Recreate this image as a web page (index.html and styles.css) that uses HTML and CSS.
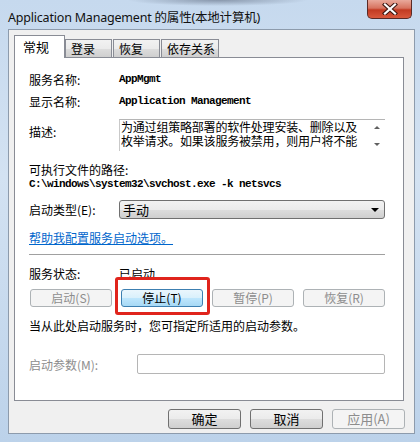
FILE: index.html
```html
<!DOCTYPE html>
<html>
<head>
    <meta charset="utf-8">
    <link rel="stylesheet" href="styles.css">
</head>
<body>
    <div class="window">
        <div class="titlebar">
            <span class="title">Application Management 的属性(本地计算机)</span>
            <div class="close">
                <svg width="16" height="12" viewBox="0 0 16 12">
                    <path d="M3 1.5 L13 10.5 M13 1.5 L3 10.5" stroke="#3b1510" stroke-width="4.2" stroke-linecap="square"/>
                    <path d="M3 1.5 L13 10.5 M13 1.5 L3 10.5" stroke="#ffffff" stroke-width="2.2" stroke-linecap="square"/>
                </svg>
            </div>
        </div>

        <div class="client">
            <div class="tabs">
                <div class="tab selected">常规</div>
                <div class="tab">登录</div>
                <div class="tab">恢复</div>
                <div class="tab">依存关系</div>
            </div>

            <div class="panel">
                <div class="row first">
                    <span class="label">服务名称:</span>
                    <span class="mono">AppMgmt</span>
                </div>
                <div class="row">
                    <span class="label">显示名称:</span>
                    <span class="mono">Application Management</span>
                </div>
                <div class="row desc-row">
                    <span class="label desc-label">描述:</span>
                    <div class="textarea">
                        <div class="desc-text">
                            <div>为通过组策略部署的软件处理安装、删除以及</div>
                            <div>枚举请求。如果该服务被禁用，则用户将不能</div>
                        </div>
                        <div class="scroll">
                            <span class="arrow up"></span>
                            <span class="arrow down"></span>
                        </div>
                    </div>
                </div>
                <div class="path-label">可执行文件的路径:</div>
                <div class="mono path">C:\windows\system32\svchost.exe -k netsvcs</div>
                <div class="row select-row">
                    <span class="label">启动类型(E):</span>
                    <div class="select">
                        <span>手动</span>
                        <span class="select-arrow"></span>
                    </div>
                </div>
                <a class="help" href="#">帮助我配置服务启动选项。</a>
                <div class="separator"></div>
                <div class="row status-row">
                    <span class="label">服务状态:</span>
                    <span>已启动</span>
                </div>
                <div class="actions">
                    <button class="btn" disabled>启动(S)</button>
                    <button class="btn hot">停止(T)</button>
                    <button class="btn" disabled>暂停(P)</button>
                    <button class="btn" disabled>恢复(R)</button>
                </div>
                <div class="note">当从此处启动服务时，您可指定所适用的启动参数。</div>
                <div class="row param-row">
                    <span class="label disabled-text">启动参数(M):</span>
                    <div class="input"></div>
                </div>
            </div>

            <div class="footer">
                <button class="btn wide">确定</button>
                <button class="btn wide">取消</button>
                <button class="btn wide" disabled>应用(A)</button>
            </div>
        </div>
    </div>
</body>
</html>
```

FILE: styles.css
```css
body {
    margin: 0;
    width: 420px;
    height: 442px;
    overflow: hidden;
    font-family: "Noto Sans CJK SC", "Noto Sans", sans-serif;
    font-size: 12px;
    color: #000;
}

.window {
    height: 442px;
    display: flex;
    flex-direction: column;
    background: linear-gradient(180deg, #c6d9ee 0%, #d3e2f2 40%, #bcd2ea 100%);
    box-sizing: border-box;
    padding: 0 5px 8px 8px;
}

.titlebar {
    height: 29px;
    display: flex;
    justify-content: space-between;
    align-items: flex-start;
    background: radial-gradient(ellipse 90px 6px at 210px 0px, rgba(60, 70, 90, 0.45), transparent);
}

.title {
    margin-top: 7px;
    font-family: "Noto Sans", "Noto Sans CJK SC", sans-serif;
    font-size: 12.5px;
    letter-spacing: -0.2px;
    color: #111;
}

.close {
    width: 45px;
    height: 19px;
    margin-right: 3px;
    box-sizing: border-box;
    border: 1px solid #5a2a26;
    border-top: none;
    border-radius: 0 0 5px 5px;
    background: linear-gradient(180deg, #e9a99b 0%, #d7735f 45%, #c23a22 55%, #d9583c 100%);
    display: flex;
    align-items: center;
    justify-content: center;
}

.client {
    flex: 1;
    background: #f0f0f0;
    border: 1px solid #8d9bac;
    padding: 5px 10px 0 5px;
    display: flex;
    flex-direction: column;
}

.tabs {
    display: flex;
    align-items: flex-end;
    height: 22px;
    position: relative;
    z-index: 1;
}

.tab {
    height: 18px;
    box-sizing: border-box;
    border: 1px solid #898c95;
    border-bottom: none;
    margin-right: 1px;
    padding: 0 5px;
    line-height: 17px;
    font-size: 12px;
    white-space: nowrap;
    background: linear-gradient(180deg, #f2f2f2 0%, #ebebeb 50%, #dddddd 51%, #cfcfcf 100%);
}

.tab.selected {
    height: 23px;
    width: 51px;
    padding: 2px 8px 0;
    font-size: 13px;
    background: #fff;
    margin-bottom: -1px;
    margin-right: 0;
}

.tab:nth-child(2) { width: 47px; }
.tab:nth-child(3) { width: 47px; }
.tab:nth-child(4) { width: 58px; }

.panel {
    height: 344px;
    box-sizing: border-box;
    background: #fff;
    border: 1px solid #898c95;
    padding: 14px 18px 0 14px;
    display: flex;
    flex-direction: column;
}

.row {
    display: flex;
    align-items: center;
    height: 14px;
    margin-top: 8px;
}

.row.first {
    margin-top: 0;
}

.label {
    width: 90px;
    flex-shrink: 0;
}

.mono {
    font-family: "Liberation Mono", monospace;
    font-size: 11px;
    font-weight: bold;
    letter-spacing: -0.6px;
    line-height: 14px;
}

.desc-row {
    height: 32px;
    margin-top: 11px;
    align-items: flex-start;
}

.desc-label {
    padding-top: 4px;
}

.textarea {
    flex: 1;
    height: 32px;
    display: flex;
    border-top: 1px solid #b5b5b5;
    border-left: 1px solid #c9c9c9;
    box-sizing: border-box;
}

.desc-text {
    flex: 1;
    white-space: nowrap;
    line-height: 14px;
    padding-left: 1px;
    letter-spacing: -0.2px;
}

.scroll {
    width: 16px;
    display: flex;
    flex-direction: column;
    align-items: center;
    justify-content: space-between;
    padding: 6px 0 5px;
    box-sizing: border-box;
}

.arrow {
    width: 0;
    height: 0;
    border-left: 3px solid transparent;
    border-right: 3px solid transparent;
}

.arrow.up {
    border-bottom: 3px solid #606060;
}

.arrow.down {
    border-top: 3px solid #606060;
}

.path-label {
    margin-top: 12px;
    line-height: 14px;
}

.path {
    line-height: 14px;
}

.select-row {
    height: 19px;
    margin-top: 9px;
}

.select {
    flex: 1;
    height: 19px;
    box-sizing: border-box;
    border: 1px solid #707070;
    border-radius: 3px;
    background: linear-gradient(180deg, #f2f2f2 0%, #ebebeb 50%, #dddddd 51%, #cfcfcf 100%);
    display: flex;
    align-items: center;
    justify-content: space-between;
    padding: 0 5px 0 3px;
    font-size: 13px;
}

.select-arrow {
    width: 0;
    height: 0;
    border-left: 4px solid transparent;
    border-right: 4px solid transparent;
    border-top: 4px solid #000;
}

.help {
    margin-top: 12px;
    line-height: 14px;
    color: #0066cc;
    text-decoration: underline;
    align-self: flex-start;
}

.separator {
    margin-top: 9px;
    height: 1px;
    background: #a0a0a0;
}

.status-row {
    margin-top: 11px;
}

.actions {
    display: flex;
    justify-content: space-between;
    margin-top: 9px;
    padding-left: 1px;
}

.btn {
    width: 82px;
    height: 18px;
    box-sizing: border-box;
    border: 1px solid #707070;
    border-radius: 3px;
    background: linear-gradient(180deg, #f2f2f2 0%, #ebebeb 50%, #dddddd 51%, #cfcfcf 100%);
    font-family: "Noto Sans CJK SC", sans-serif;
    font-size: 12px;
    line-height: 14px;
    padding: 0;
    color: #000;
}

.btn:disabled {
    border-color: #adb2b5;
    background: #f4f4f4;
    color: #8d8d8d;
}

.btn.hot {
    position: relative;
    border-color: #3c7fb1;
    background: linear-gradient(180deg, #eaf6fd 0%, #d9f0fc 50%, #bee6fd 51%, #a7d9f5 100%);
}

.btn.hot::after {
    content: "";
    position: absolute;
    top: -13px;
    bottom: -9px;
    left: -7px;
    right: -8px;
    border: 3px solid #e0241c;
    border-radius: 3px;
}

.note {
    margin-top: 12px;
    line-height: 14px;
}

.param-row {
    height: 20px;
    margin-top: 21px;
}

.param-row .label {
    width: 108px;
}

.disabled-text {
    color: #8d8d8d;
}

.input {
    flex: 1;
    height: 20px;
    box-sizing: border-box;
    border: 1px solid #b5b5b5;
    border-radius: 2px;
    background: #fff;
}

.footer {
    display: flex;
    justify-content: flex-end;
    gap: 9px;
    margin-top: 8px;
    margin-right: -1px;
}

.btn.wide {
    width: 73px;
    height: 20px;
    font-size: 13px;
}
```
